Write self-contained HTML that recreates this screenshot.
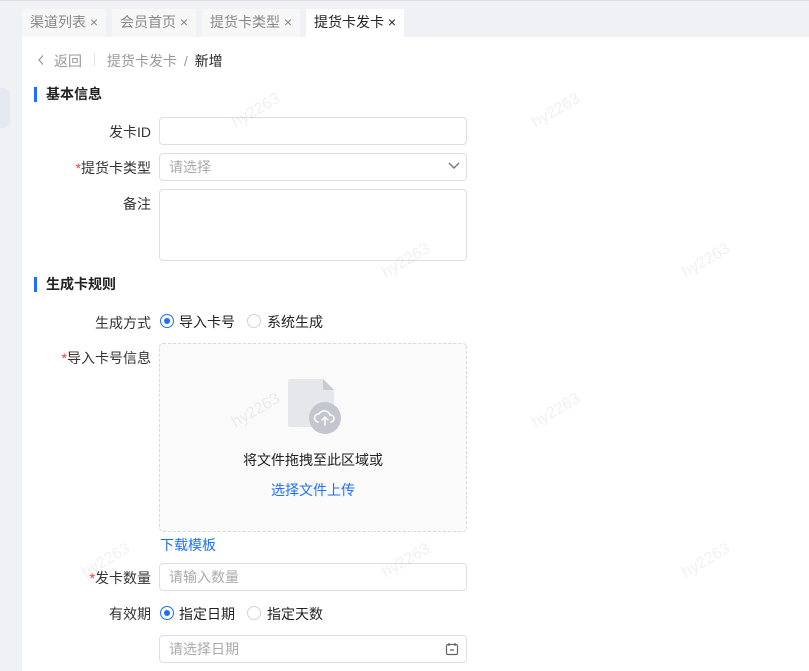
<!DOCTYPE html>
<html><head><meta charset="utf-8"><style>
body{margin:0;width:809px;height:671px;overflow:hidden;background:#fff;font-family:"Liberation Sans","Noto Sans CJK SC",sans-serif;font-size:14px;color:#333;position:relative}
.abs{position:absolute}
.side{left:0;top:0;width:22px;height:671px;background:#f0f1f4}
.topbar{left:0;top:0;width:809px;height:37px;background:#f0f1f4;border-top:1px solid #dcdde0}
.tab{top:9px;height:28px;background:#f7f7f8;color:#888;line-height:27px;padding-left:8px;box-sizing:border-box;font-size:14px}
.tab.act{background:#fff;color:#222}
.lbl{width:151px;text-align:right;font-size:14px;color:#333}
.lbl i{color:#f33;font-style:normal}
.inp{left:159px;width:308px;border:1px solid #dcdfe6;border-radius:4px;box-sizing:border-box;color:#aaa;padding-left:9px;line-height:26px;font-size:14px}
.sec{left:34px;font-weight:bold;color:#222;font-size:14px;padding-left:9px;border-left:3px solid #1f6fff;line-height:15px}
.radio{width:14px;height:14px;border-radius:50%;border:1px solid #d0d3d9;box-sizing:border-box}
.radio.on{border:1px solid #1f6fff}
.radio.on::after{content:"";position:absolute;left:3px;top:3px;width:6px;height:6px;border-radius:50%;background:#1f6fff}
.wm{color:#000;opacity:.06;font-size:16px;transform:rotate(-30deg)}
</style></head><body>
<div class="abs side"></div>
<div class="abs" style="left:0;top:88px;width:10px;height:40px;background:#e6e9f2;border-radius:0 6px 6px 0"></div>
<div class="abs topbar"></div>
<div class="abs" style="left:22px;top:37px;width:787px;height:634px;background:#fff"></div>
<div class="abs tab" style="left:22px;width:84px">渠道列表 ×</div>
<div class="abs tab" style="left:112px;width:84px">会员首页 ×</div>
<div class="abs tab" style="left:202px;width:98px">提货卡类型 ×</div>
<div class="abs tab act" style="left:306px;width:98px">提货卡发卡 <b style="font-weight:normal;color:#222">×</b></div>

<svg class="abs" style="left:36px;top:54px" width="10" height="12"><path d="M7 1.5L3 6l4 4.5" fill="none" stroke="#999" stroke-width="1.3"/></svg>
<div class="abs" style="left:54px;top:51px;color:#999">返回</div>
<div class="abs" style="left:94px;top:53px;width:1px;height:13px;background:#e3e3e3"></div>
<div class="abs" style="left:107px;top:51px;color:#999">提货卡发卡 <span style="margin:0 3px">/</span> <span style="color:#222">新增</span></div>

<div class="abs sec" style="top:87px">基本信息</div>
<div class="abs lbl" style="top:122px">发卡ID</div>
<div class="abs inp" style="top:117px;height:28px"></div>
<div class="abs lbl" style="top:158px"><i>*</i>提货卡类型</div>
<div class="abs inp" style="top:153px;height:28px">请选择</div>
<svg class="abs" style="left:447px;top:161px" width="14" height="10"><path d="M2 2l5 5 5-5" fill="none" stroke="#777" stroke-width="1.4"/></svg>
<div class="abs lbl" style="top:194px">备注</div>
<div class="abs inp" style="top:189px;height:72px"></div>

<div class="abs sec" style="top:277px">生成卡规则</div>
<div class="abs lbl" style="top:313px">生成方式</div>
<div class="abs radio on" style="left:160px;top:314px"></div>
<div class="abs" style="left:179px;top:312px;color:#222">导入卡号</div>
<div class="abs radio" style="left:247px;top:314px"></div>
<div class="abs" style="left:267px;top:312px;color:#222">系统生成</div>

<div class="abs lbl" style="top:348px"><i>*</i>导入卡号信息</div>
<div class="abs" style="left:159px;top:343px;width:308px;height:189px;border:1px dashed #d6d8dc;border-radius:4px;box-sizing:border-box;background:#fafafa"></div>
<svg class="abs" style="left:287px;top:379px" width="56" height="56">
<path d="M1 2a2 2 0 0 1 2-2h33l11 11v35a2 2 0 0 1-2 2H3a2 2 0 0 1-2-2z" fill="#e6e7eb"/>
<path d="M36 0l11 11h-9a2 2 0 0 1-2-2z" fill="#c9cbd2"/>
<circle cx="38" cy="39" r="16" fill="#c3c6ce"/>
<path d="M31 43a4 4 0 0 1 1-8 6 6 0 0 1 11 1 3.5 3.5 0 0 1 1 7M38 46v-8M35 41l3-3 3 3" fill="none" stroke="#fff" stroke-width="1.5" stroke-linecap="round"/>
</svg>
<div class="abs" style="left:159px;width:308px;top:450px;text-align:center;color:#222">将文件拖拽至此区域或</div>
<div class="abs" style="left:159px;width:308px;top:480px;text-align:center;color:#1f6fff">选择文件上传</div>
<div class="abs" style="left:160px;top:535px;color:#1f6fff">下载模板</div>

<div class="abs lbl" style="top:568px"><i>*</i>发卡数量</div>
<div class="abs inp" style="top:563px;height:28px">请输入数量</div>
<div class="abs lbl" style="top:604px">有效期</div>
<div class="abs radio on" style="left:160px;top:606px"></div>
<div class="abs" style="left:179px;top:604px;color:#222">指定日期</div>
<div class="abs radio" style="left:247px;top:606px"></div>
<div class="abs" style="left:267px;top:604px;color:#222">指定天数</div>
<div class="abs inp" style="top:635px;height:28px">请选择日期</div>
<svg class="abs" style="left:445px;top:642px" width="14" height="14"><rect x="1.5" y="2.5" width="11" height="10" rx="1.5" fill="none" stroke="#666" stroke-width="1.2"/><path d="M4 1v3M10 1v3M5 8h4" stroke="#666" stroke-width="1.2"/></svg>

<div class="abs wm" style="left:230px;top:102px">hy2263</div>
<div class="abs wm" style="left:530px;top:102px">hy2263</div>
<div class="abs wm" style="left:380px;top:252px">hy2263</div>
<div class="abs wm" style="left:680px;top:252px">hy2263</div>
<div class="abs wm" style="left:230px;top:402px">hy2263</div>
<div class="abs wm" style="left:530px;top:402px">hy2263</div>
<div class="abs wm" style="left:80px;top:552px">hy2263</div>
<div class="abs wm" style="left:380px;top:552px">hy2263</div>
<div class="abs wm" style="left:680px;top:552px">hy2263</div>
</body></html>
